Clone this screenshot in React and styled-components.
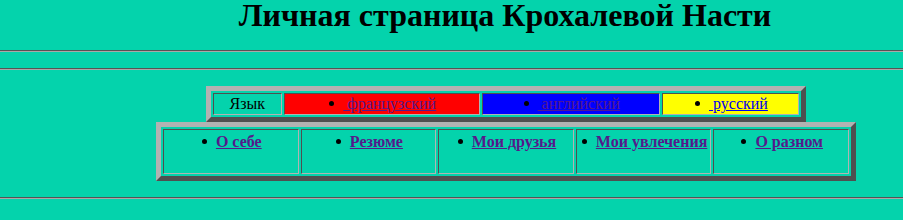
import React from "react";
import styled, { createGlobalStyle } from "styled-components";

const Global = createGlobalStyle`
  html, body { margin: 0; padding: 0; background: #04d3ac; }
  body {
    font-family: "Liberation Serif", "Times New Roman", serif;
    font-size: 16px;
    color: #000;
  }
`;

const Page = styled.div`
  width: 903px;
  display: flex;
  flex-direction: column;
`;

const Title = styled.h1`
  margin: 0;
  padding-left: 107px;
  text-align: center;
  font-size: 32px;
  font-weight: bold;
  line-height: 31px;
`;

const Rule = styled.hr`
  margin: ${(p) => p.$top}px 0 0;
  height: 0;
  border: 0;
  border-top: 1px solid #555555;
  border-bottom: 1px solid #a9a9a9;
`;

const Center = styled.div`
  margin-top: 16px;
  padding-left: 109px;
  display: flex;
  flex-direction: column;
  align-items: center;
`;

const Frame = styled.table`
  box-sizing: border-box;
  width: ${(p) => p.$w}px;
  border-collapse: separate;
  border-spacing: 2px;
  border: 5px solid;
  border-color: #b2b2b2 #4f4f4f #4f4f4f #b2b2b2;
`;

const Cell = styled.td`
  border: 1px solid;
  border-color: #4f4f4f #b2b2b2 #b2b2b2 #4f4f4f;
  padding: ${(p) => (p.$menu ? "3px 1px 1px" : "1px")};
  width: ${(p) => p.$w || "auto"};
  background: ${(p) => p.$bg || "transparent"};
  text-align: center;
  vertical-align: top;
`;

const List = styled.ul`
  margin: 0;
  padding: 0 0 0 16px;
  list-style: none;
  height: ${(p) => (p.$h ? `${p.$h}px` : "auto")};
`;

const Item = styled.li`
  line-height: normal;
  white-space: nowrap;
`;

const Bullet = styled.span`
  display: inline-block;
  width: 5px;
  height: 5px;
  margin: 0 9px 0 -14px;
  border-radius: 50%;
  background: #000;
  vertical-align: 3px;
`;

const Link = styled.a`
  color: ${(p) => p.$color};
  text-decoration: underline;
  font-weight: ${(p) => (p.$bold ? "bold" : "normal")};
`;

const langs = [
  { label: "французский", bg: "#ff0000", color: "#551a8b" },
  { label: "английский", bg: "#0000ff", color: "#551a8b" },
  { label: "русский", bg: "#ffff00", color: "#0000ee" },
];

const menu = ["О себе", "Резюме", "Мои друзья", "Мои увлечения", "О разном"];

export default function App() {
  return (
    <Page>
      <Global />
      <Title>Личная страница Крохалевой Насти</Title>
      <Rule $top={19} />
      <Rule $top={16} />
      <Center>
        <Frame $w={600}>
          <tbody>
            <tr>
              <Cell>Язык</Cell>
              {langs.map((l) => (
                <Cell key={l.label} $bg={l.bg}>
                  <List>
                    <Item>
                      <Bullet />
                      <Link href="#" $color={l.color}>
                        {"\u00a0" + l.label}
                      </Link>
                    </Item>
                  </List>
                </Cell>
              ))}
            </tr>
          </tbody>
        </Frame>
        <Frame $w={700}>
          <tbody>
            <tr>
              {menu.map((m) => (
                <Cell key={m} $menu $w="20%">
                  <List $h={39}>
                    <Item>
                      <Bullet />
                      <Link href="#" $color="#551a8b" $bold>
                        {m}
                      </Link>
                    </Item>
                  </List>
                </Cell>
              ))}
            </tr>
          </tbody>
        </Frame>
      </Center>
      <Rule $top={16} />
    </Page>
  );
}
